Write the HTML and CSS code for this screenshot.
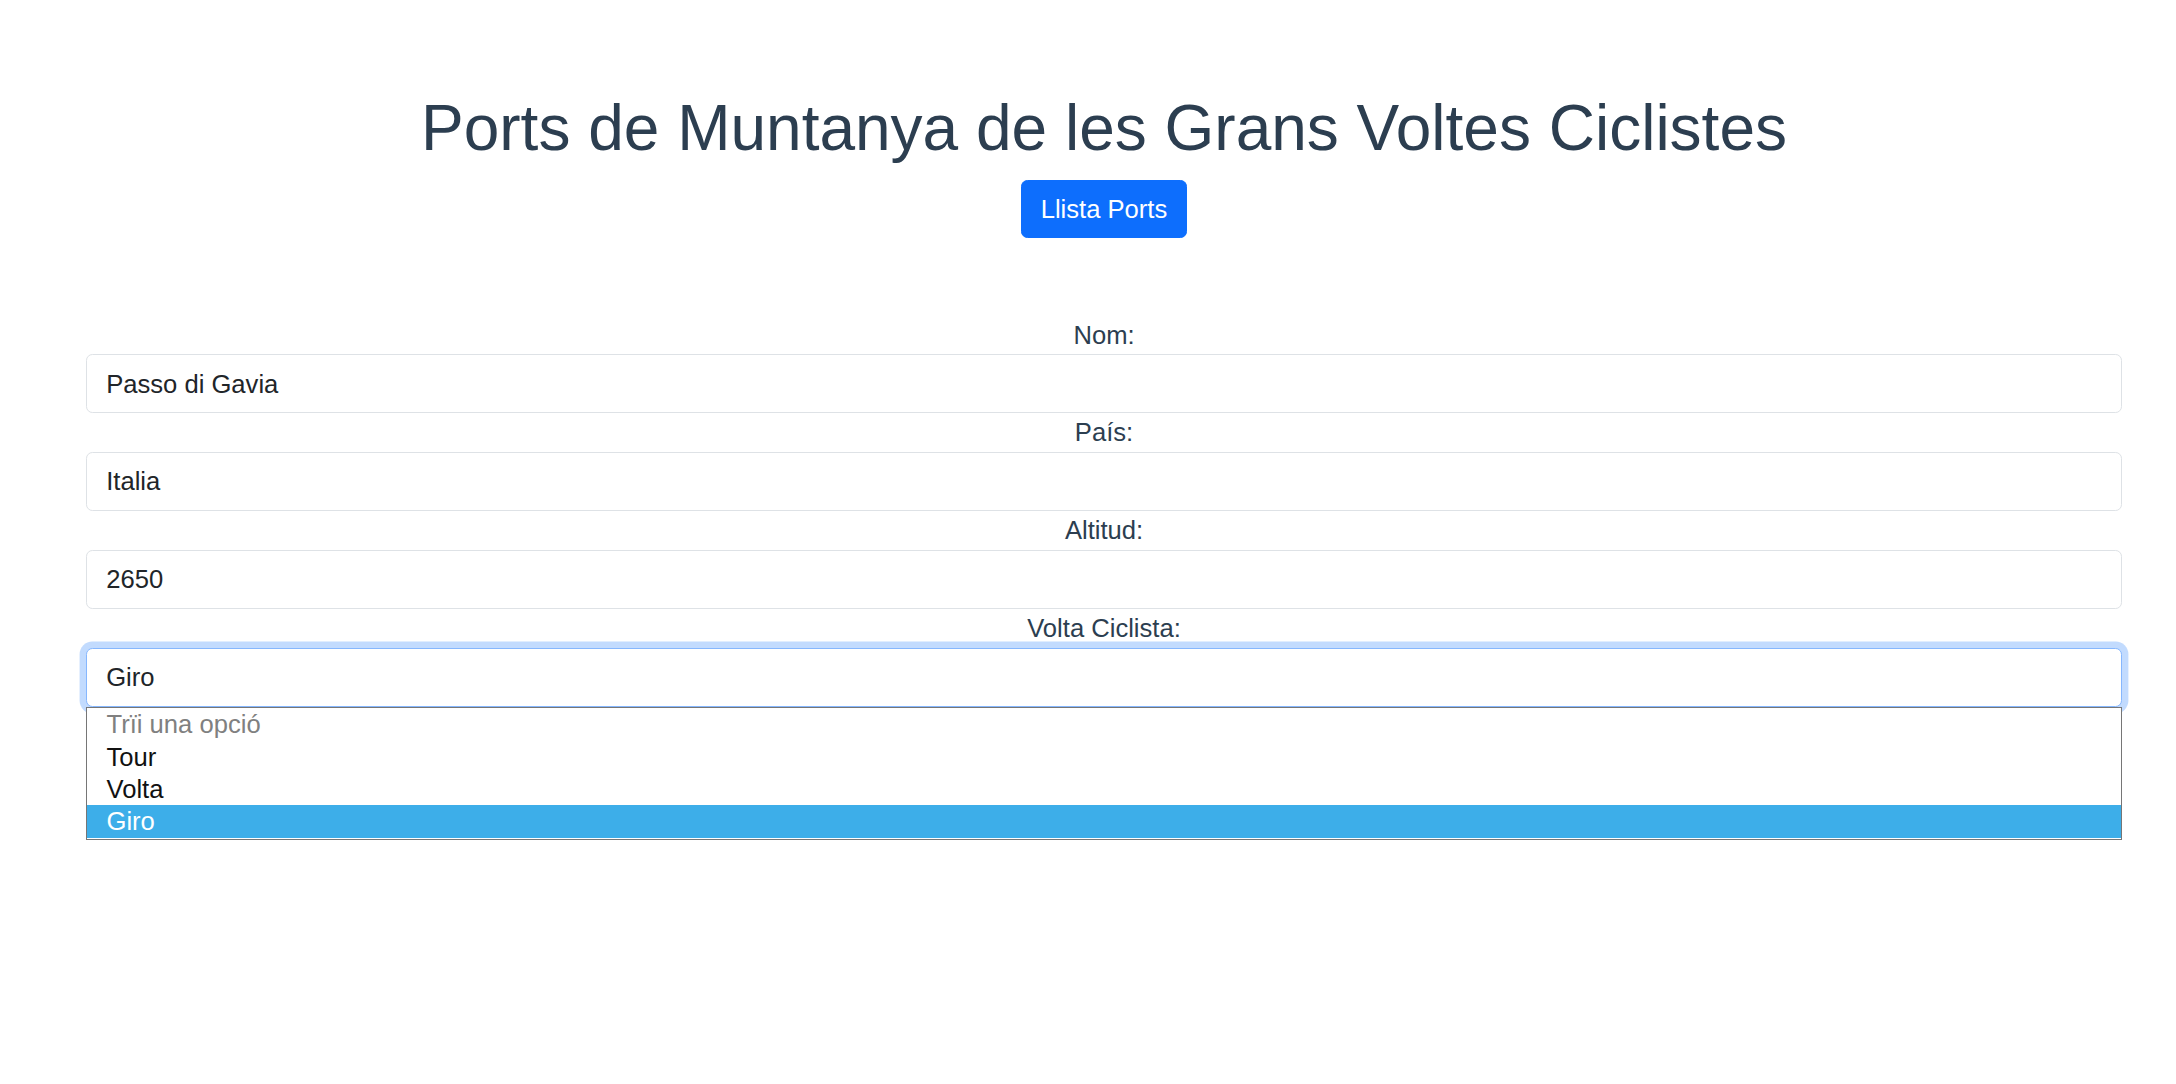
FILE: index.html
```html
<!DOCTYPE html>
<html lang="ca">
<head>
<meta charset="utf-8">
<title>Ports de Muntanya</title>
<link rel="stylesheet" href="styles.css">
</head>
<body>
<div class="app">
  <h1 class="title">Ports de Muntanya de les Grans Voltes Ciclistes</h1>
  <button class="btn" type="button">Llista Ports</button>
  <form class="form">
    <label class="label" for="nom">Nom:</label>
    <input class="control" id="nom" type="text" value="Passo di Gavia">
    <label class="label" for="pais">País:</label>
    <input class="control" id="pais" type="text" value="Italia">
    <label class="label" for="alt">Altitud:</label>
    <input class="control" id="alt" type="text" value="2650">
    <label class="label">Volta Ciclista:</label>
    <div class="control control-focus">Giro</div>
    <div class="listbox">
      <div class="option option-placeholder">Trïi una opció</div>
      <div class="option">Tour</div>
      <div class="option">Volta</div>
      <div class="option option-selected">Giro</div>
    </div>
  </form>
</div>
</body>
</html>
```

FILE: styles.css
```css
html, body {
  margin: 0;
  padding: 0;
  background: #ffffff;
}

.app {
  font-family: "Liberation Sans", Arial, Helvetica, sans-serif;
  color: #2c3e50;
  text-align: center;
  padding: 90px 54px 0 86px;
}

.title {
  margin: 0 0 12.8px 0;
  font-size: 64px;
  font-weight: 400;
  line-height: 76.8px;
}

.btn {
  display: inline-block;
  font-family: inherit;
  font-size: 25.6px;
  line-height: 38.4px;
  padding: 9px 19.2px;
  border: 1px solid #0d6efd;
  border-radius: 6.4px;
  background: #0d6efd;
  color: #ffffff;
  margin: 0;
}

.form {
  margin-top: 77.5px;
  display: flex;
  flex-direction: column;
}

.label {
  display: block;
  font-size: 25.6px;
  line-height: 38.4px;
  text-align: center;
  color: #2c3e50;
}

.control {
  display: block;
  width: 100%;
  box-sizing: border-box;
  font-family: inherit;
  font-size: 25.6px;
  line-height: 38.4px;
  padding: 9.6px 19.2px;
  border: 1px solid #dee2e6;
  border-radius: 6.4px;
  color: #212529;
  background: #ffffff;
  text-align: left;
  margin: 0;
  outline: none;
}

.control-focus {
  border-color: #86b7fe;
  box-shadow: 0 0 0 6.4px rgba(13, 110, 253, 0.25);
}

.listbox {
  box-sizing: border-box;
  width: 100%;
  padding: 0 0 1px 0;
  background: #ffffff;
  border: 1px solid #767676;
  text-align: left;
}

.option {
  font-size: 25.6px;
  line-height: 32px;
  height: 32.3px;
  padding: 0 0 0 19.5px;
  color: #111111;
}

.option-placeholder {
  color: #808080;
}

.option-selected {
  background: #3daee9;
  color: #ffffff;
}
```
